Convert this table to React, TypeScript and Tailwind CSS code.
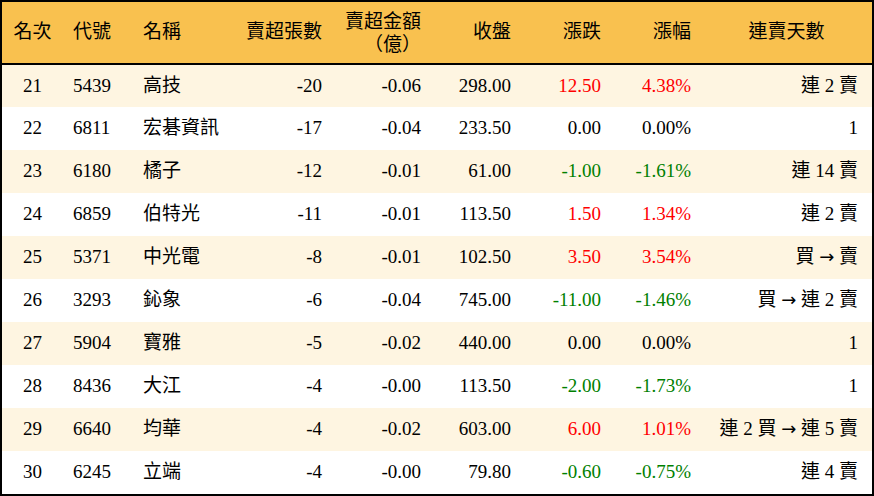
import React from 'react'

type Row = {
  rank: number
  code: string
  name: string
  lots: number
  amount: string
  close: string
  change: string
  pct: string
  streak: string
}

const rows: Row[] = [
  { rank: 21, code: '5439', name: '高技', lots: -20, amount: '-0.06', close: '298.00', change: '12.50', pct: '4.38%', streak: '連 2 賣' },
  { rank: 22, code: '6811', name: '宏碁資訊', lots: -17, amount: '-0.04', close: '233.50', change: '0.00', pct: '0.00%', streak: '1' },
  { rank: 23, code: '6180', name: '橘子', lots: -12, amount: '-0.01', close: '61.00', change: '-1.00', pct: '-1.61%', streak: '連 14 賣' },
  { rank: 24, code: '6859', name: '伯特光', lots: -11, amount: '-0.01', close: '113.50', change: '1.50', pct: '1.34%', streak: '連 2 賣' },
  { rank: 25, code: '5371', name: '中光電', lots: -8, amount: '-0.01', close: '102.50', change: '3.50', pct: '3.54%', streak: '買 → 賣' },
  { rank: 26, code: '3293', name: '鈊象', lots: -6, amount: '-0.04', close: '745.00', change: '-11.00', pct: '-1.46%', streak: '買 → 連 2 賣' },
  { rank: 27, code: '5904', name: '寶雅', lots: -5, amount: '-0.02', close: '440.00', change: '0.00', pct: '0.00%', streak: '1' },
  { rank: 28, code: '8436', name: '大江', lots: -4, amount: '-0.00', close: '113.50', change: '-2.00', pct: '-1.73%', streak: '1' },
  { rank: 29, code: '6640', name: '均華', lots: -4, amount: '-0.02', close: '603.00', change: '6.00', pct: '1.01%', streak: '連 2 買 → 連 5 賣' },
  { rank: 30, code: '6245', name: '立端', lots: -4, amount: '-0.00', close: '79.80', change: '-0.60', pct: '-0.75%', streak: '連 4 賣' },
]

// red for up, green for down, black when flat
const tone = (v: string) =>
  v.startsWith('-') ? 'text-[#008000]' : parseFloat(v) > 0 ? 'text-[#ff0000]' : 'text-black'

// the arrow needs a wider glyph than the serif font gives
const Streak = ({ text }: { text: string }) => {
  const parts = text.split('→')
  return (
    <>
      {parts.map((p, i) => (
        <React.Fragment key={i}>
          {i > 0 && <span className="font-['DejaVu_Sans'] text-[18px]">→</span>}
          {p}
        </React.Fragment>
      ))}
    </>
  )
}

export default function App() {
  return (
    <div
      className="w-[874px] h-[496px] overflow-hidden bg-white border-2 border-black text-black text-[19px]"
      style={{ fontFamily: '"Liberation Serif", "Noto Sans CJK TC", serif' }}
    >
      <table className="table-fixed border-collapse w-[870px]">
        <colgroup>
          <col className="w-[61px]" />
          <col className="w-[70px]" />
          <col className="w-[107px]" />
          <col className="w-[92px]" />
          <col className="w-[99px]" />
          <col className="w-[90px]" />
          <col className="w-[90px]" />
          <col className="w-[90px]" />
          <col className="w-[171px]" />
        </colgroup>
        <thead>
          <tr className="h-[62px] bg-[#f9c14f] border-b-2 border-black">
            <th className="font-normal text-center">名次</th>
            <th className="font-normal text-left pl-[10px]">代號</th>
            <th className="font-normal text-left pl-[10px]">名稱</th>
            <th className="font-normal text-right pr-[10px]">賣超張數</th>
            <th className="font-normal text-right pr-[10px] leading-[23px]">
              賣超金額
              <br />
              （億）
            </th>
            <th className="font-normal text-right pr-[10px]">收盤</th>
            <th className="font-normal text-right pr-[10px]">漲跌</th>
            <th className="font-normal text-right pr-[10px]">漲幅</th>
            <th className="font-normal text-center">連賣天數</th>
          </tr>
        </thead>
        <tbody>
          {rows.map((r, i) => (
            <tr key={r.rank} className={i % 2 === 0 ? 'h-[43px] bg-[#fef5e1]' : 'h-[43px] bg-white'}>
              <td className="text-center">{r.rank}</td>
              <td className="pl-[10px]">{r.code}</td>
              <td className="pl-[10px] whitespace-nowrap">{r.name}</td>
              <td className="text-right pr-[10px]">{r.lots}</td>
              <td className="text-right pr-[10px]">{r.amount}</td>
              <td className="text-right pr-[10px]">{r.close}</td>
              <td className={`text-right pr-[10px] ${tone(r.change)}`}>{r.change}</td>
              <td className={`text-right pr-[10px] ${tone(r.pct)}`}>{r.pct}</td>
              <td className="text-right pr-[14px] whitespace-nowrap">
                <Streak text={r.streak} />
              </td>
            </tr>
          ))}
        </tbody>
      </table>
    </div>
  )
}
